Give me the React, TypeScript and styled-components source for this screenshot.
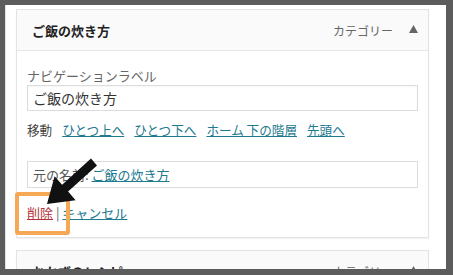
import React from "react";
import styled, { createGlobalStyle } from "styled-components";

const GlobalStyle = createGlobalStyle`
  html, body {
    margin: 0;
    padding: 0;
    background: #5c5c5c;
  }
  body {
    font-family: "Noto Sans CJK JP", "Liberation Sans", sans-serif;
    color: #444;
  }
`;

const Screen = styled.div`
  position: relative;
  margin: 5px 0 0 5px;
  width: 441px;
  height: 264px;
  overflow: hidden;
  background: #fff;
  border-left: 1px solid #e2e2e2;
  box-sizing: border-box;
  padding: 4px 0 0 10px;
`;

const Card = styled.div<{ $gap?: number }>`
  width: 413px;
  box-sizing: border-box;
  border: 1px solid #e3e3e3;
  box-shadow: 0 1px 1px rgba(0, 0, 0, 0.05);
  background: #fff;
  margin-top: ${(p) => p.$gap ?? 0}px;
`;

const Header = styled.div`
  height: 40px;
  display: flex;
  align-items: center;
  padding: 0 10px 0 15px;
  background: #fafafa;
  border-bottom: 1px solid #e6e6e6;
`;

const Title = styled.div`
  flex: 1;
  font-size: 13px;
  font-weight: 700;
  color: #222;
`;

const Kind = styled.span`
  font-size: 12px;
  color: #666;
  margin-right: 16px;
`;

const Toggle = styled.svg`
  width: 9px;
  height: 8px;
  margin-bottom: 2px;
`;

const Body = styled.div`
  position: relative;
  padding: 16px 10px 15px 10px;
`;

const Label = styled.div`
  font-size: 13px;
  line-height: 18px;
  color: #666;
`;

const TextBox = styled.div`
  height: 26px;
  box-sizing: border-box;
  border: 1px solid #dcdcdc;
  box-shadow: inset 0 1px 2px rgba(0, 0, 0, 0.04);
  padding-left: 5px;
  font-size: 14px;
  line-height: 24px;
  color: #333;
`;

const MoveRow = styled.div`
  display: flex;
  gap: 10px;
  margin-top: 10px;
  font-size: 12.6px;
  line-height: 18px;
  color: #444;
`;

const Link = styled.a<{ $danger?: boolean }>`
  color: ${(p) => (p.$danger ? "#b3333b" : "#1d7a8f")};
  text-decoration: underline;
  cursor: pointer;
`;

const Original = styled.div`
  margin-top: 22px;
  height: 27px;
  box-sizing: border-box;
  border: 1px solid #dcdcdc;
  padding-left: 5px;
  font-size: 13px;
  line-height: 25px;
  color: #555;
`;

const Actions = styled.div`
  position: relative;
  margin-top: 16px;
  font-size: 13px;
  line-height: 18px;
  color: #666;
`;

const Highlight = styled.div`
  position: absolute;
  left: -12px;
  top: -12px;
  width: 55px;
  height: 43px;
  box-sizing: border-box;
  border: 4px solid #f6a955;
  border-radius: 3px;
  pointer-events: none;
`;

const Overlay = styled.svg`
  position: absolute;
  left: 0;
  top: 0;
  pointer-events: none;
`;

const Arrow = () => (
  <Overlay width={441} height={264} viewBox="5 5 441 264">
    <polygon
      points="90,158.6 61.1,184.8 53.6,176.2 46,204 74.6,200.2 67.1,191.6 96,165.4"
      fill="#111"
    />
  </Overlay>
);

const CardHeader = ({ title }: { title: string }) => (
  <Header>
    <Title>{title}</Title>
    <Kind>カテゴリー</Kind>
    <Toggle viewBox="0 0 9 8">
      <polygon points="4.5,0 9,8 0,8" fill="#666" />
    </Toggle>
  </Header>
);

export default function App() {
  return (
    <>
      <GlobalStyle />
      <Screen>
        <Card>
          <CardHeader title="ご飯の炊き方" />
          <Body>
            <Label>ナビゲーションラベル</Label>
            <TextBox>ご飯の炊き方</TextBox>
            <MoveRow>
              <span>移動</span>
              <Link>ひとつ上へ</Link>
              <Link>ひとつ下へ</Link>
              <Link>ホーム 下の階層</Link>
              <Link>先頭へ</Link>
            </MoveRow>
            <Original>
              元の名前: <Link>ご飯の炊き方</Link>
            </Original>
            <Actions>
              <Highlight />
              <Link $danger>削除</Link> | <Link>キャンセル</Link>
            </Actions>
          </Body>
        </Card>
        <Card $gap={12}>
          <CardHeader title="おかずのレシピ" />
        </Card>
        <Arrow />
      </Screen>
    </>
  );
}
